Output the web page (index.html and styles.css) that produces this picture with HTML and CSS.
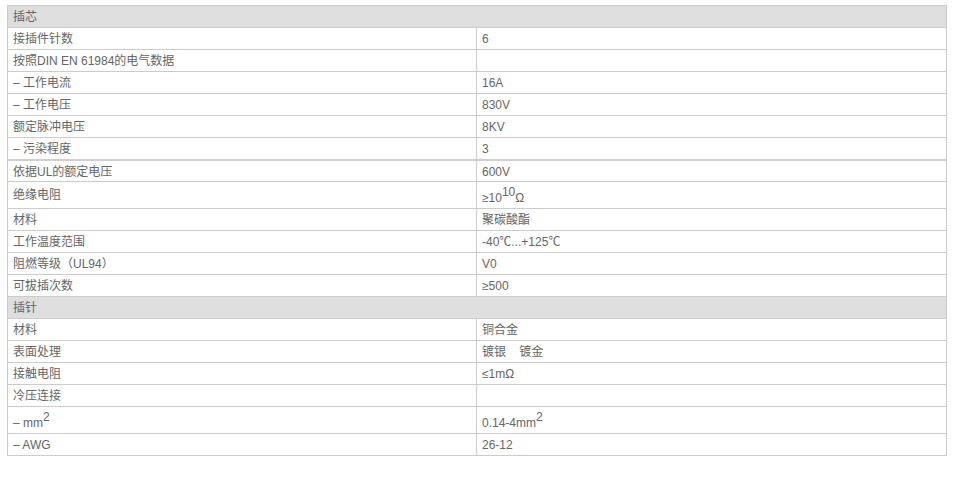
FILE: index.html
```html
<!DOCTYPE html>
<html lang="zh">
<head>
<meta charset="utf-8">
<title>插芯</title>
<link rel="stylesheet" href="styles.css">
</head>
<body>
<div class="spec">
  <div class="row head"><div class="cell full">插芯</div></div>
  <div class="row"><div class="cell key">接插件针数</div><div class="cell val">6</div></div>
  <div class="row"><div class="cell key">按照DIN EN 61984的电气数据</div><div class="cell val"></div></div>
  <div class="row"><div class="cell key">– 工作电流</div><div class="cell val">16A</div></div>
  <div class="row"><div class="cell key">– 工作电压</div><div class="cell val">830V</div></div>
  <div class="row"><div class="cell key">额定脉冲电压</div><div class="cell val">8KV</div></div>
  <div class="row split"><div class="cell key">– 污染程度</div><div class="cell val">3</div></div>
  <div class="row after"><div class="cell key">依据UL的额定电压</div><div class="cell val">600V</div></div>
  <div class="row tall"><div class="cell key mid">绝缘电阻</div><div class="cell val low">≥10<sup>10</sup>Ω</div></div>
  <div class="row"><div class="cell key">材料</div><div class="cell val">聚碳酸酯</div></div>
  <div class="row"><div class="cell key">工作温度范围</div><div class="cell val">-40℃...+125℃</div></div>
  <div class="row"><div class="cell key">阻燃等级（UL94）</div><div class="cell val">V0</div></div>
  <div class="row"><div class="cell key">可拔插次数</div><div class="cell val">≥500</div></div>
  <div class="row head"><div class="cell full">插针</div></div>
  <div class="row"><div class="cell key">材料</div><div class="cell val">铜合金</div></div>
  <div class="row"><div class="cell key">表面处理</div><div class="cell val">镀银&nbsp;&nbsp;&nbsp;&nbsp;镀金</div></div>
  <div class="row"><div class="cell key">接触电阻</div><div class="cell val">≤1mΩ</div></div>
  <div class="row"><div class="cell key">冷压连接</div><div class="cell val"></div></div>
  <div class="row tall"><div class="cell key low">– mm<sup>2</sup></div><div class="cell val low">0.14-4mm<sup>2</sup></div></div>
  <div class="row"><div class="cell key">– AWG</div><div class="cell val">26-12</div></div>
</div>
</body>
</html>
```
FILE: styles.css
```css
html, body {
  margin: 0;
  padding: 0;
  background: #fff;
}
body {
  padding: 5px 0 0 7px;
  font-family: "Liberation Sans", Arial, "Noto Sans CJK SC", sans-serif;
  font-size: 12px;
  color: #666;
}
.spec {
  width: 940px;
  box-sizing: border-box;
  border: 1px solid #cccccc;
  border-bottom: none;
}
.row {
  display: flex;
  height: 21px;
  border-bottom: 1px solid #cccccc;
}
.row.split {
  border-bottom: 2px solid #cfcfcf;
}
.row.after {
  height: 20px;
}
.row.after .cell {
  line-height: 20px;
}
.row.tall {
  height: 26px;
}
.row.head {
  background: #dedede;
}
.cell {
  display: block;
  padding: 1px 5px 0;
  white-space: nowrap;
  line-height: 20px;
}
.cell.full {
  flex: 1;
}
.cell.key {
  width: 458px;
  border-right: 1px solid #cccccc;
}
.cell.val {
  flex: 1;
}
.cell.mid {
  line-height: 25px;
}
.cell.low {
  padding-top: 6px;
}
sup {
  font-size: 12px;
  line-height: 0;
  vertical-align: baseline;
  position: relative;
  top: -6px;
}
```
